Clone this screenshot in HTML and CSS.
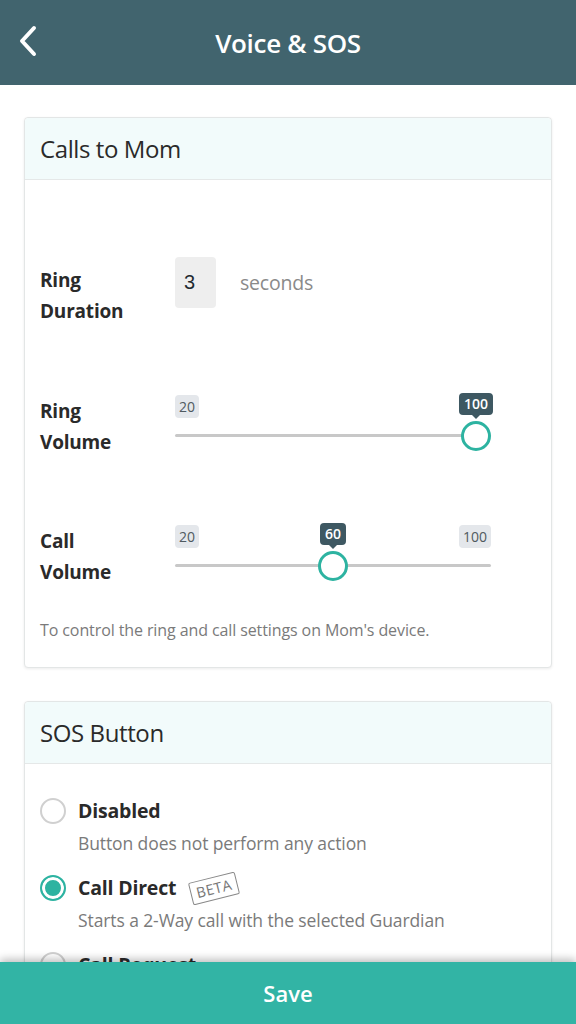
FILE: index.html
```html
<!DOCTYPE html>
<html lang="en">
<head>
<meta charset="utf-8">
<title>Voice &amp; SOS</title>
<link rel="stylesheet" href="styles.css">
</head>
<body>
<div class="app">
  <header class="topbar">
    <button class="back" aria-label="Back">
      <svg width="20" height="32" viewBox="0 0 20 32"><polyline points="16,3 4,16 16,29" fill="none" stroke="#fff" stroke-width="4" stroke-linecap="round" stroke-linejoin="round"/></svg>
    </button>
    <h1 class="title">Voice &amp; SOS</h1>
  </header>

  <main class="content">
    <section class="card">
      <div class="card-head">Calls to Mom</div>
      <div class="card-body calls">
        <div class="row row-duration">
          <div class="label">Ring<br>Duration</div>
          <div class="duration">
            <div class="num-box">3</div>
            <span class="unit">seconds</span>
          </div>
        </div>

        <div class="row row-slider">
          <div class="label">Ring<br>Volume</div>
          <div class="slider">
            <div class="pills">
              <span class="pill">20</span>
              <span class="pill hidden">100</span>
            </div>
            <div class="track"></div>
            <div class="thumb-wrap" style="--p:1">
              <span class="tip">100</span>
              <span class="thumb"></span>
            </div>
          </div>
        </div>

        <div class="row row-slider">
          <div class="label">Call<br>Volume</div>
          <div class="slider">
            <div class="pills">
              <span class="pill">20</span>
              <span class="pill">100</span>
            </div>
            <div class="track"></div>
            <div class="thumb-wrap" style="--p:0.5">
              <span class="tip">60</span>
              <span class="thumb"></span>
            </div>
          </div>
        </div>

        <p class="note">To control the ring and call settings on Mom's device.</p>
      </div>
    </section>

    <section class="card">
      <div class="card-head">SOS Button</div>
      <div class="card-body sos">
        <div class="option">
          <span class="radio"></span>
          <div class="opt-text">
            <div class="opt-title">Disabled</div>
            <div class="opt-desc">Button does not perform any action</div>
          </div>
        </div>
        <div class="option">
          <span class="radio checked"></span>
          <div class="opt-text">
            <div class="opt-title">Call Direct <span class="beta">BETA</span></div>
            <div class="opt-desc">Starts a 2-Way call with the selected Guardian</div>
          </div>
        </div>
        <div class="option">
          <span class="radio"></span>
          <div class="opt-text">
            <div class="opt-title">Call Request</div>
            <div class="opt-desc">Sends a call request to the Guardian</div>
          </div>
        </div>
      </div>
    </section>
  </main>

  <footer class="savebar">Save</footer>
</div>
</body>
</html>
```

FILE: styles.css
```css
* { box-sizing: border-box; }
html, body { margin: 0; padding: 0; }
body {
  font-family: "Open Sans", "Noto Sans", sans-serif;
  color: #2b2b2b;
  background: #fff;
}
.app {
  width: 576px;
  height: 1024px;
  display: flex;
  flex-direction: column;
  overflow: hidden;
}
.topbar {
  flex: 0 0 85px;
  background: #41646e;
  display: flex;
  align-items: center;
  justify-content: center;
  position: relative;
}
.back {
  position: absolute;
  left: 18px;
  top: 25px;
  background: none;
  border: 0;
  padding: 0;
  width: 20px;
  height: 32px;
}
.back svg { display: block; }
.title {
  margin: 0;
  color: #fff;
  font-size: 26px;
  font-weight: 600;
  letter-spacing: -0.3px;
}
.content {
  flex: 1 1 auto;
  overflow: hidden;
  padding: 32px 24px 0;
}
.card {
  border: 1px solid #e3e6e6;
  border-radius: 4px;
  box-shadow: 0 1px 3px rgba(0,0,0,0.08);
  background: #fff;
  margin-bottom: 33px;
}
.card-head {
  height: 62px;
  background: #f2fbfb;
  border-bottom: 1px solid #e5e8e8;
  border-radius: 4px 4px 0 0;
  padding: 0 15px;
  display: flex;
  align-items: center;
  font-size: 24px;
  color: #2a2a2a;
  letter-spacing: -0.4px;
}
.card-body { padding: 0 15px; }
.calls { padding-top: 77px; padding-bottom: 26px; }
.row { display: flex; align-items: flex-start; }
.label {
  width: 135px;
  flex: 0 0 135px;
  font-size: 19px;
  font-weight: 700;
  line-height: 31px;
  color: #2a2a2a;
  letter-spacing: -0.2px;
}
.row-duration .label { padding-top: 8px; }
.row-slider .label { padding-top: 3px; }
.duration { display: flex; align-items: center; height: 51px; }
.num-box {
  width: 41px;
  height: 51px;
  background: #eeeeee;
  border-radius: 4px;
  display: flex;
  align-items: center;
  padding-left: 9px;
  font-family: "Liberation Sans", Arial, sans-serif;
  font-size: 20px;
  color: #1f2a30;
}
.unit { margin-left: 24px; font-size: 19.5px; color: #8a8a8a; letter-spacing: -0.2px; }

.row-slider { margin-top: 66px; }
.row-slider + .row-slider { margin-top: 65px; }
.slider {
  position: relative;
  width: 316px;
  height: 60px;
}
.pills {
  display: flex;
  justify-content: space-between;
  padding-top: 2px;
}
.pill {
  background: #e4e7eb;
  color: #505a60;
  font-size: 14px;
  line-height: 23px;
  height: 23px;
  padding: 0 4px;
  border-radius: 4px;
}
.pill.hidden { visibility: hidden; }
.track {
  margin-top: 16px;
  height: 3px;
  background: #c8c8c8;
  border-radius: 2px;
}
.thumb-wrap {
  position: absolute;
  top: 0;
  left: calc(15px + var(--p) * (100% - 30px));
  transform: translateX(-50%);
  display: flex;
  flex-direction: column;
  align-items: center;
}
.tip {
  position: relative;
  background: #3e5862;
  color: #fff;
  font-size: 14px;
  font-weight: 600;
  line-height: 22px;
  height: 22px;
  padding: 0 5px;
  border-radius: 4px;
}
.tip::after {
  content: "";
  position: absolute;
  left: 50%;
  bottom: -4px;
  margin-left: -4px;
  border-left: 4px solid transparent;
  border-right: 4px solid transparent;
  border-top: 4px solid #3e5862;
}
.thumb {
  margin-top: 6px;
  width: 30px;
  height: 30px;
  border-radius: 50%;
  border: 3px solid #2db3a1;
  background: #fff;
}
.note {
  margin: 31px 0 0;
  font-size: 16px;
  line-height: 22px;
  color: #7a7a7a;
  letter-spacing: -0.1px;
}

.sos { padding-top: 31px; padding-bottom: 10px; }
.option { display: flex; align-items: flex-start; margin-bottom: 13px; }
.radio {
  flex: 0 0 26px;
  width: 26px;
  height: 26px;
  border-radius: 50%;
  border: 2px solid #d0d0d0;
  margin-top: 3px;
  margin-right: 12px;
  background: #fff;
}
.radio.checked {
  border-color: #2db3a1;
  box-shadow: inset 0 0 0 3px #fff;
  background: #2db3a1;
}
.opt-title {
  font-size: 19.5px;
  font-weight: 700;
  line-height: 32px;
  color: #2a2a2a;
  display: flex;
  align-items: center;
  letter-spacing: -0.2px;
}
.opt-desc {
  font-size: 17.5px;
  line-height: 32px;
  color: #7a7a7a;
  letter-spacing: -0.1px;
}
.beta {
  display: inline-block;
  margin-left: 14px;
  font-size: 14.5px;
  font-weight: 400;
  line-height: 21px;
  padding: 0 5px;
  color: #777;
  border: 1.5px solid #888;
  border-radius: 2px;
  transform: rotate(-14deg);
  letter-spacing: 0.3px;
}
.savebar {
  flex: 0 0 62px;
  background: #32b4a5;
  color: #fff;
  font-size: 22px;
  font-weight: 600;
  display: flex;
  align-items: center;
  justify-content: center;
  box-shadow: 0 -3px 8px rgba(0,0,0,0.25);
  position: relative;
  z-index: 2;
}
```
